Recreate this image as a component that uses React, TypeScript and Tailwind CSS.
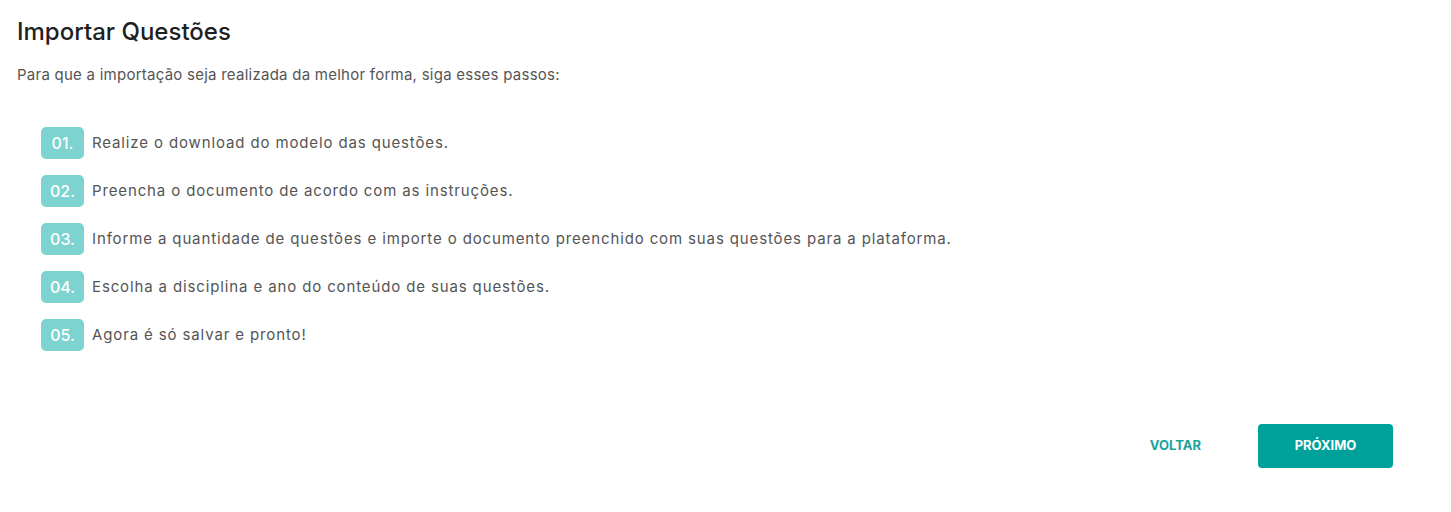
const steps = [
  "Realize o download do modelo das questões.",
  "Preencha o documento de acordo com as instruções.",
  "Informe a quantidade de questões e importe o documento preenchido com suas questões para a plataforma.",
  "Escolha a disciplina e ano do conteúdo de suas questões.",
  "Agora é só salvar e pronto!",
];

export default function App() {
  return (
    <div className="min-h-screen bg-white font-['Inter',sans-serif]">
      <div className="px-[17px] pt-[17px]">
        <h1 className="text-[24px] font-medium leading-[30px] text-[#1f1f1f]">Importar Questões</h1>
        <p className="mt-[18px] text-[15px] leading-[20px] tracking-[0.25px] text-[#555]">
          Para que a importação seja realizada da melhor forma, siga esses passos:
        </p>
        <ol className="mt-[42px] ml-[24px] flex flex-col gap-[16px]">
          {steps.map((s, i) => (
            <li key={i} className="flex items-center gap-[8px]">
              <span className="flex h-[32px] w-[43px] items-center justify-center rounded-[5px] bg-[#7dd3cf] text-[16px] font-medium text-white">
                0{i + 1}.
              </span>
              <span className="text-[15px] tracking-[0.87px] text-[#555]">{s}</span>
            </li>
          ))}
        </ol>
      </div>
      <div className="mt-[73px] flex items-center justify-end gap-[57px] pr-[58px]">
        <button className="text-[13px] font-bold text-[#1aa39c]">VOLTAR</button>
        <button className="h-[44px] w-[135px] rounded-[4px] bg-[#00a19a] text-[13px] font-bold text-white">
          PRÓXIMO
        </button>
      </div>
    </div>
  );
}
